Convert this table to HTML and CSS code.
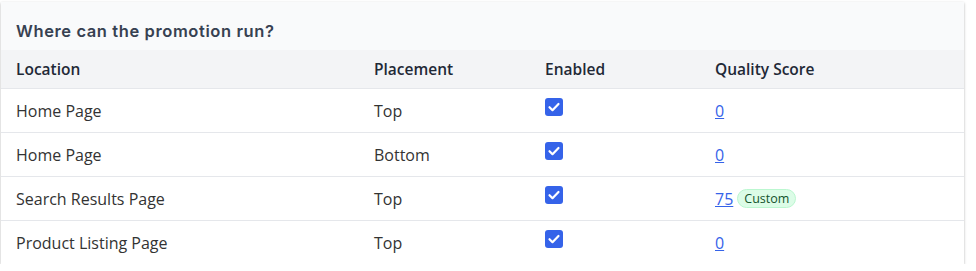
FILE: index.html
```html
<!DOCTYPE html>
<html lang="en">
<head>
    <meta charset="UTF-8">
    <title>Promotion placements</title>
    <link rel="stylesheet" href="styles.css">
</head>
<body>
<div class="card">
    <div class="card-title">Where can the promotion run?</div>
    <table class="placements">
        <thead>
        <tr>
            <th class="col-location">Location</th>
            <th class="col-placement">Placement</th>
            <th class="col-enabled">Enabled</th>
            <th>Quality Score</th>
        </tr>
        </thead>
        <tbody>
        <tr>
            <td>Home Page</td>
            <td>Top</td>
            <td><span class="check"><svg viewBox="0 0 18 18"><path d="M4.5 9.2l3 3 6-6.2"/></svg></span></td>
            <td><a href="#">0</a></td>
        </tr>
        <tr>
            <td>Home Page</td>
            <td>Bottom</td>
            <td><span class="check"><svg viewBox="0 0 18 18"><path d="M4.5 9.2l3 3 6-6.2"/></svg></span></td>
            <td><a href="#">0</a></td>
        </tr>
        <tr>
            <td>Search Results Page</td>
            <td>Top</td>
            <td><span class="check"><svg viewBox="0 0 18 18"><path d="M4.5 9.2l3 3 6-6.2"/></svg></span></td>
            <td><a href="#">75</a><span class="badge">Custom</span></td>
        </tr>
        <tr>
            <td>Product Listing Page</td>
            <td>Top</td>
            <td><span class="check"><svg viewBox="0 0 18 18"><path d="M4.5 9.2l3 3 6-6.2"/></svg></span></td>
            <td><a href="#">0</a></td>
        </tr>
        </tbody>
    </table>
</div>
</body>
</html>
```

FILE: styles.css
```css
* {
    padding: 0;
    margin: 0;
    box-sizing: border-box;
}

body {
    padding: 2px 0 0 1px;
    background-color: #fff;
    font-family: "Open Sans", "Noto Sans", sans-serif;
    color: #374151;
}

.card {
    width: 963px;
    background-color: #fff;
    box-shadow: 0 1px 3px rgba(0, 0, 0, 0.2), 0 1px 2px rgba(0, 0, 0, 0.1);
}

.card-title {
    height: 48px;
    padding: 19px 15px 0;
    background-color: #f9fafb;
    font-family: "Inter", "Liberation Sans", sans-serif;
    font-size: 16.5px;
    font-weight: 600;
    letter-spacing: 0.6px;
    color: #374151;
}

.placements {
    width: 100%;
    border-collapse: collapse;
    font-size: 16px;
}

.placements th {
    height: 38px;
    padding: 0 15px;
    background-color: #f3f4f6;
    text-align: left;
    font-size: 15.5px;
    font-weight: 600;
    color: #1f2937;
    border-bottom: 1px solid #e5e7eb;
}

.placements td {
    height: 44px;
    padding: 2px 15px 0;
    border-bottom: 1px solid #e5e7eb;
    color: #333;
}

.placements tbody tr:last-child td {
    border-bottom: none;
}

.col-location {
    width: 358px;
}

.col-placement {
    width: 171px;
}

.col-enabled {
    width: 170px;
}

.check {
    display: inline-block;
    width: 18px;
    height: 18px;
    border-radius: 3px;
    background-color: #3563e9;
    vertical-align: 4px;
}

.check svg {
    display: block;
    width: 18px;
    height: 18px;
    fill: none;
    stroke: #fff;
    stroke-width: 2.2;
    stroke-linecap: round;
    stroke-linejoin: round;
}

.placements a {
    color: #3563e9;
    text-decoration: underline;
}

.badge {
    display: inline-block;
    margin-left: 4px;
    padding: 0 6px;
    height: 19px;
    line-height: 17px;
    border: 1px solid #bbf7d0;
    border-radius: 10px;
    background-color: #dcfce7;
    color: #14532d;
    font-size: 12.5px;
    vertical-align: 2px;
}
```
